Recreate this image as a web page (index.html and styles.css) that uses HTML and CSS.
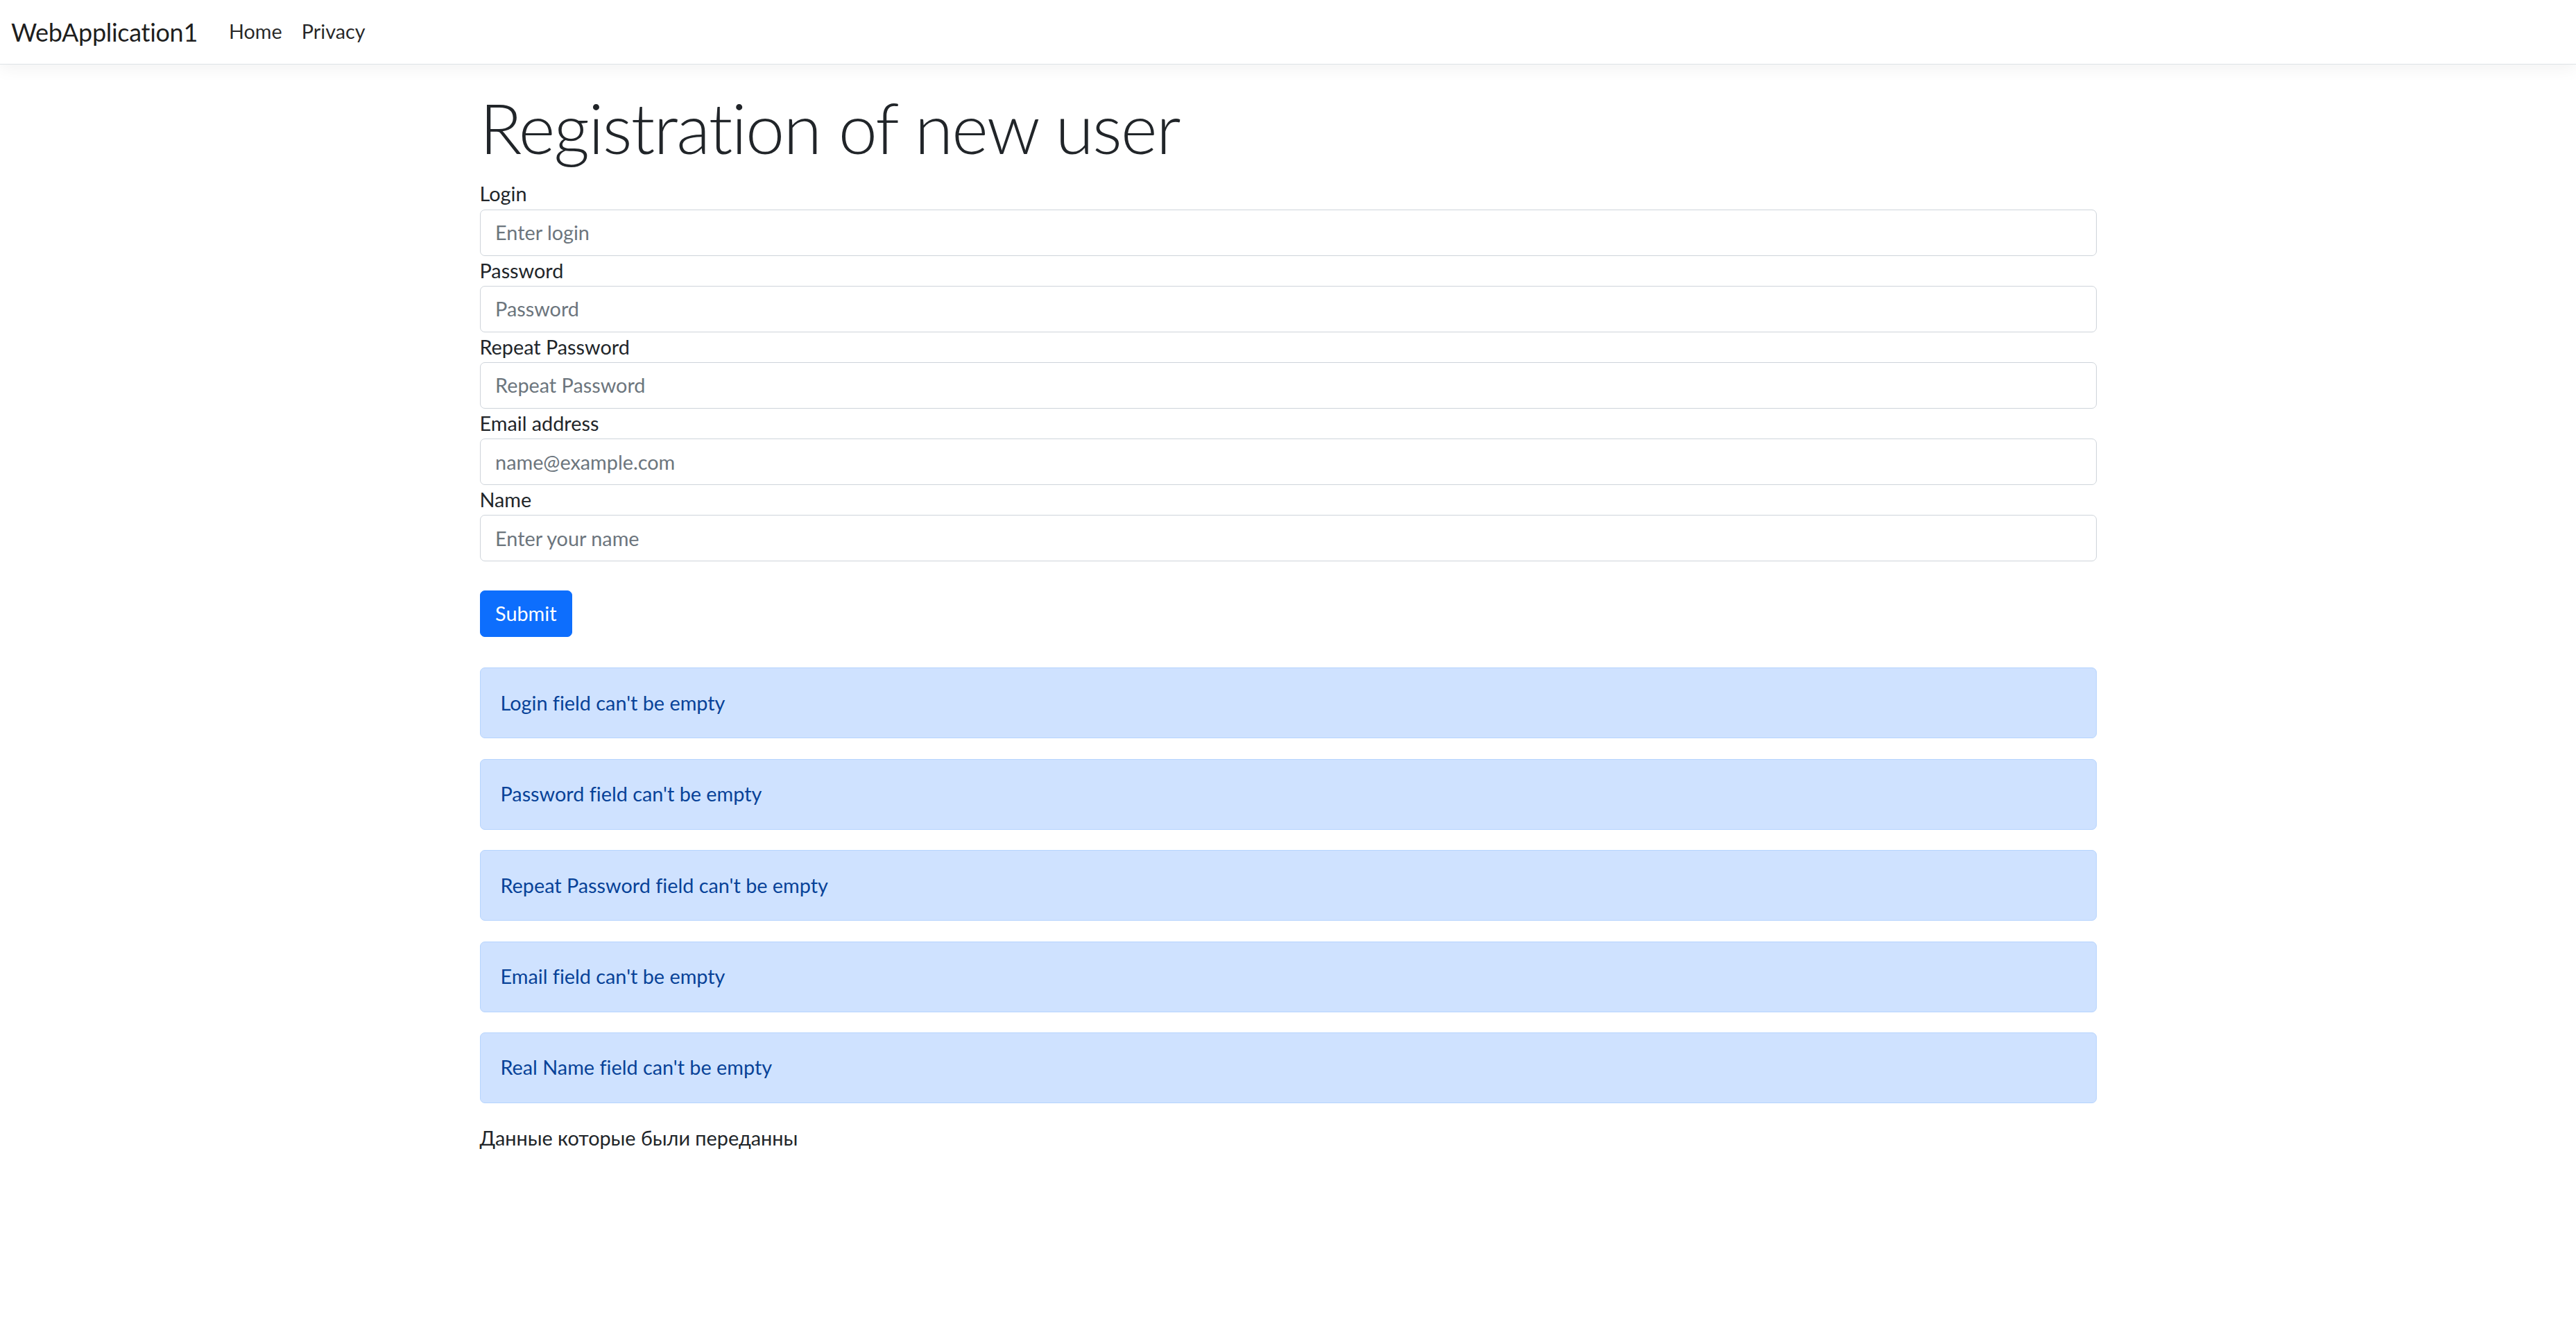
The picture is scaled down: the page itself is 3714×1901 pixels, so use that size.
FILE: index.html
```html
<!DOCTYPE html>
<html lang="en">
<head>
<meta charset="utf-8">
<title>Registration - WebApplication1</title>
<link rel="stylesheet" href="styles.css">
</head>
<body>
<header class="navbar">
  <a class="brand" href="#">WebApplication1</a>
  <nav class="nav">
    <a class="nav-link" href="#">Home</a>
    <a class="nav-link" href="#">Privacy</a>
  </nav>
</header>
<main class="container">
  <h1 class="title">Registration of new user</h1>
  <form class="form">
    <div class="field">
      <label class="label" for="login">Login</label>
      <input class="input" id="login" type="text" placeholder="Enter login">
    </div>
    <div class="field">
      <label class="label" for="password">Password</label>
      <input class="input" id="password" type="password" placeholder="Password">
    </div>
    <div class="field">
      <label class="label" for="repeat">Repeat Password</label>
      <input class="input" id="repeat" type="password" placeholder="Repeat Password">
    </div>
    <div class="field">
      <label class="label" for="email">Email address</label>
      <input class="input" id="email" type="email" placeholder="name@example.com">
    </div>
    <div class="field">
      <label class="label" for="name">Name</label>
      <input class="input" id="name" type="text" placeholder="Enter your name">
    </div>
    <button class="btn" type="button">Submit</button>
  </form>
  <div class="alerts">
    <div class="alert">Login field can't be empty</div>
    <div class="alert">Password field can't be empty</div>
    <div class="alert">Repeat Password field can't be empty</div>
    <div class="alert">Email field can't be empty</div>
    <div class="alert">Real Name field can't be empty</div>
  </div>
  <p class="note">Данные которые были переданны</p>
</main>
</body>
</html>
```

FILE: styles.css
```css
html, body {
  margin: 0;
  padding: 0;
  background: #fff;
}

body {
  font-family: "Lato", "Liberation Sans", sans-serif;
  font-size: 28.8px;
  line-height: 1.5;
  color: #212529;
  font-variant-ligatures: none;
}

.navbar {
  display: flex;
  align-items: center;
  height: 92px;
  padding: 0 16px;
  border-bottom: 1px solid #dee2e6;
  box-shadow: 0 7px 22px rgba(0, 0, 0, 0.05);
  background: #fff;
}

.brand {
  font-size: 36px;
  line-height: 1.5;
  color: rgba(0, 0, 0, 0.9);
  text-decoration: none;
  margin-right: 31px;
  letter-spacing: -0.3px;
}

.nav {
  display: flex;
}

.nav-link {
  padding: 0 14px;
  color: rgba(0, 0, 0, 0.85);
  text-decoration: none;
  font-size: 28.8px;
}

.container {
  width: 2331px;
  margin: 30px auto 0;
}

.title {
  font-size: 100.8px;
  font-weight: 300;
  line-height: 1.2;
  letter-spacing: -1.8px;
  margin: 0 0 14.4px;
}

.label {
  display: block;
  line-height: 43.2px;
}

.input {
  display: block;
  width: 100%;
  box-sizing: border-box;
  height: 67px;
  margin: 0;
  padding: 0 21.6px;
  border: 1px solid #ced4da;
  border-radius: 7px;
  font: inherit;
  color: #212529;
  background: #fff;
}

.input::placeholder {
  color: #6c757d;
  opacity: 1;
}

.btn {
  display: block;
  margin-top: 42px;
  height: 67px;
  padding: 0 21.6px;
  border: 1px solid #0d6efd;
  border-radius: 7px;
  background: #0d6efd;
  color: #fff;
  font: inherit;
}

.alerts {
  margin-top: 44px;
}

.alert {
  display: flex;
  align-items: center;
  box-sizing: border-box;
  height: 102px;
  padding: 0 29px;
  margin-bottom: 29.4px;
  border: 1px solid #b6d4fe;
  border-radius: 7px;
  background: #cfe2ff;
  color: #084298;
}

.note {
  margin: 0;
  line-height: 43.2px;
}
```
